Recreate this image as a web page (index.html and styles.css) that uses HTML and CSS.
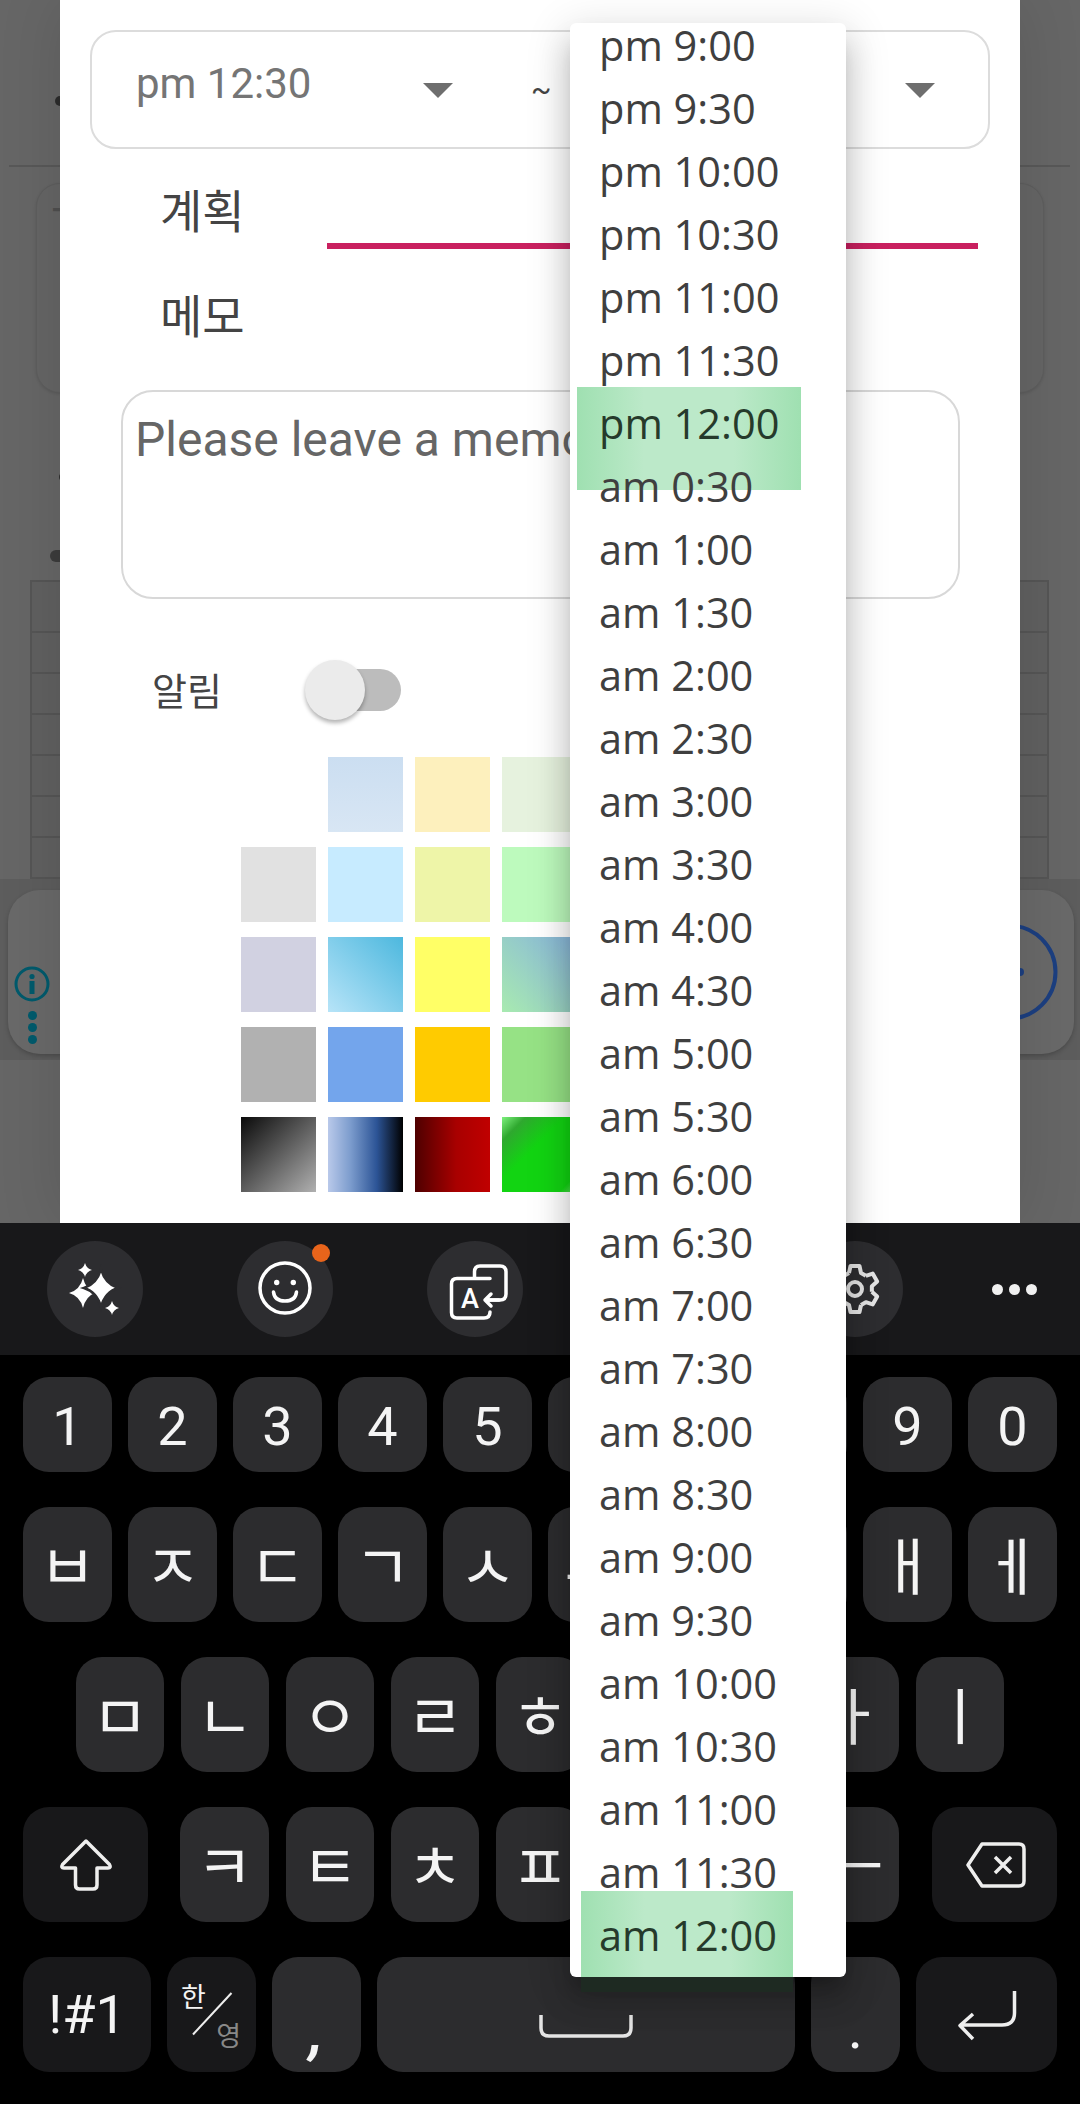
FILE: index.html
```html
<!DOCTYPE html>
<html lang="ko">
<head>
<meta charset="utf-8">
<title>Plan</title>
<link rel="stylesheet" href="styles.css">
</head>
<body>
<div class="screen">
  <div class="page">
    <div class="bg-dot bg-dot-a"></div>
    <div class="bg-rule"></div>
    <div class="bg-card"><span class="bg-card-t">T</span></div>
    <div class="bg-dot bg-dot-b"></div>
    <div class="bg-pill"></div>
    <div class="bg-table">
      <div class="bg-head"></div>
      <div class="bg-row"></div><div class="bg-row"></div><div class="bg-row"></div>
      <div class="bg-row"></div><div class="bg-row"></div><div class="bg-row"></div>
    </div>
    <div class="bg-band">
      <div class="bg-panel">
        <div class="panel-tools">
          <svg class="info-icon" viewBox="0 0 36 36"><circle cx="18" cy="18" r="16" fill="none" stroke="#005a6c" stroke-width="3"/><circle cx="18" cy="10.5" r="2.6" fill="#005a6c"/><rect x="15.5" y="15" width="5" height="13" fill="#005a6c"/></svg>
          <div class="tool-dots"><i></i><i></i><i></i></div>
        </div>
        <svg class="panel-ring" viewBox="0 0 98 98"><circle cx="49" cy="49" r="46.5" fill="none" stroke="#1c3f80" stroke-width="4"/><circle cx="60" cy="49" r="4" fill="#1c3f80"/></svg>
      </div>
    </div>

    <div class="modal">
      <div class="time-box">
        <span class="time-value">pm 12:30</span>
        <span class="caret"></span>
        <span class="tilde">~</span>
        <span class="caret caret-end"></span>
      </div>
      <div class="plan-row">
        <span class="field-label plan-label">계획</span>
        <span class="plan-line"></span>
      </div>
      <div class="field-label memo-label">메모</div>
      <div class="memo-box">Please leave a memo</div>
      <div class="alarm-row">
        <span class="alarm-label">알림</span>
        <span class="toggle"><span class="toggle-track"></span><span class="toggle-thumb"></span></span>
      </div>
      <div class="swatches">
        <span></span>
        <span class="sw sw-a2"></span><span class="sw sw-a3"></span><span class="sw sw-a4"></span>
        <span class="sw sw-b1"></span><span class="sw sw-b2"></span><span class="sw sw-b3"></span><span class="sw sw-b4"></span>
        <span class="sw sw-c1"></span><span class="sw sw-c2"></span><span class="sw sw-c3"></span><span class="sw sw-c4"></span>
        <span class="sw sw-d1"></span><span class="sw sw-d2"></span><span class="sw sw-d3"></span><span class="sw sw-d4"></span>
        <span class="sw sw-e1"></span><span class="sw sw-e2"></span><span class="sw sw-e3"></span><span class="sw sw-e4"></span>
      </div>
    </div>
  </div>

  <div class="keyboard">
    <div class="toolbar">
      <div class="tool">
        <svg viewBox="0 0 96 96"><path d="M36 37 Q39 49 48 52 Q39 55 36 67 Q33 55 22 52 Q33 49 36 37Z" fill="#fff"/><path d="M54 28 Q58 43 71 47 Q58 51 54 66 Q50 51 37 47 Q50 43 54 28Z" fill="#fff" stroke="#2d2d30" stroke-width="2.5"/><path d="M38 22 Q39.5 27.5 45 29 Q39.5 30.5 38 36 Q36.5 30.5 31 29 Q36.5 27.5 38 22Z" fill="#fff"/><path d="M65 60 Q66.5 65.5 72 67 Q66.5 68.5 65 74 Q63.5 68.5 58 67 Q63.5 65.5 65 60Z" fill="#fff"/></svg>
      </div>
      <div class="tool">
        <svg viewBox="0 0 96 96"><circle cx="48" cy="47" r="25" fill="none" stroke="#fff" stroke-width="3.5"/><circle cx="39.7" cy="41.5" r="2.7" fill="#fff"/><circle cx="56.3" cy="41.5" r="2.7" fill="#fff"/><path d="M36.5 51 Q37.5 60 48 60 Q58.5 60 59.5 51" fill="none" stroke="#fff" stroke-width="3.5" stroke-linecap="round"/></svg>
        <span class="tool-badge"></span>
      </div>
      <div class="tool">
        <svg viewBox="0 0 96 96"><path d="M63 37.5 Q60 37.5 58 37.5 H30 Q24.5 37.5 24.5 43 V71.5 Q24.5 77 30 77 H57 Q63 77 63 71" fill="none" stroke="#fff" stroke-width="3.5" stroke-linecap="round"/><path d="M47.5 37 V31 Q47.5 25 53 25 H73 Q79 25 79 31 V53 Q79 59 73 59 H59" fill="none" stroke="#fff" stroke-width="3.5"/><path d="M72 59 H58 M64 53 L58 59 L64 65" fill="none" stroke="#fff" stroke-width="3.5" stroke-linecap="round" stroke-linejoin="round"/><text class="tool-letter" x="43" y="67" text-anchor="middle">A</text></svg>
      </div>
      <div class="tool"></div>
      <div class="tool">
        <svg viewBox="0 0 96 96"><defs><polyline id="gear-seg" points="-6,-16 -4.5,-23 4.5,-23 6,-16 10.86,-13.2"/></defs><g transform="translate(48 48)" fill="none" stroke="#e6e6e6" stroke-width="4" stroke-linejoin="round"><use href="#gear-seg"/><use href="#gear-seg" transform="rotate(60)"/><use href="#gear-seg" transform="rotate(120)"/><use href="#gear-seg" transform="rotate(180)"/><use href="#gear-seg" transform="rotate(240)"/><use href="#gear-seg" transform="rotate(300)"/><circle r="7"/></g></svg>
      </div>
      <div class="more-dots"><i></i><i></i><i></i></div>
    </div>
    <div class="keys">
      <div class="key-row row-num">
        <span class="key num">1</span><span class="key num">2</span><span class="key num">3</span><span class="key num">4</span><span class="key num">5</span><span class="key num"></span><span class="key num"></span><span class="key num"></span><span class="key num">9</span><span class="key num">0</span>
      </div>
      <div class="key-row">
        <span class="key">ㅂ</span><span class="key">ㅈ</span><span class="key">ㄷ</span><span class="key">ㄱ</span><span class="key">ㅅ</span><span class="key">ㅛ</span><span class="key"></span><span class="key"></span><span class="key">ㅐ</span><span class="key">ㅔ</span>
      </div>
      <div class="key-row row-home">
        <span class="key">ㅁ</span><span class="key">ㄴ</span><span class="key">ㅇ</span><span class="key">ㄹ</span><span class="key">ㅎ</span><span class="key"></span><span class="key"></span><span class="key">ㅏ</span><span class="key">ㅣ</span>
      </div>
      <div class="key-row row-shift">
        <span class="key fn key-shift">
          <svg class="icon-shift" viewBox="0 0 60 60"><path d="M30 6 L6.5 29.5 Q4.5 33 8 33 H19.5 V50 Q19.5 54 23.5 54 H37 Q41 54 41 50 V33 H52 Q55.5 33 53.5 29.5 Z" fill="none" stroke="#eee" stroke-width="3.5" stroke-linejoin="round"/></svg>
        </span>
        <span class="key key-k">ㅋ</span><span class="key">ㅌ</span><span class="key">ㅊ</span><span class="key">ㅍ</span><span class="key"></span><span class="key"></span><span class="key">ㅡ</span>
        <span class="key fn key-back">
          <svg class="icon-back" viewBox="0 0 60 48"><path d="M16 3 H53 Q58 3 58 8 V40 Q58 45 53 45 H16 L2 24 Z" fill="none" stroke="#eee" stroke-width="3.5" stroke-linejoin="round"/><path d="M29 16 L45 32 M45 16 L29 32" stroke="#eee" stroke-width="3.5"/></svg>
        </span>
      </div>
      <div class="key-row row-bottom">
        <span class="key fn key-sym">!#1</span>
        <span class="key fn key-lang">
          <span class="lang-ko">한</span>
          <span class="lang-en">영</span>
          <svg class="lang-slash" viewBox="0 0 89 115"><path d="M64.5 36 L26 77.5" stroke="#eee" stroke-width="2"/></svg>
        </span>
        <span class="key key-comma">,</span>
        <span class="key key-space">
          <svg class="icon-space" viewBox="0 0 96 26"><path d="M3 2 V15 Q3 23 11 23 H85 Q93 23 93 15 V2" fill="none" stroke="#e4e4e4" stroke-width="3.5"/></svg>
        </span>
        <span class="key key-dot">.</span>
        <span class="key fn key-enter">
          <svg class="icon-enter" viewBox="0 0 70 60"><path d="M62.5 6 V28 Q62.5 40 50 40 H9 M21 29 L8 40.5 L21 54" fill="none" stroke="#eee" stroke-width="3.5" stroke-linejoin="round"/></svg>
        </span>
      </div>
    </div>
  </div>

  <div class="dropdown">
    <ul class="time-list">
      <li>pm 9:00</li><li>pm 9:30</li><li>pm 10:00</li><li>pm 10:30</li><li>pm 11:00</li><li>pm 11:30</li>
      <li><span class="hl hl-pm">pm 12:00</span></li>
      <li>am 0:30</li><li>am 1:00</li><li>am 1:30</li><li>am 2:00</li><li>am 2:30</li><li>am 3:00</li><li>am 3:30</li>
      <li>am 4:00</li><li>am 4:30</li><li>am 5:00</li><li>am 5:30</li><li>am 6:00</li><li>am 6:30</li><li>am 7:00</li>
      <li>am 7:30</li><li>am 8:00</li><li>am 8:30</li><li>am 9:00</li><li>am 9:30</li><li>am 10:00</li><li>am 10:30</li>
      <li>am 11:00</li><li>am 11:30</li>
      <li><span class="hl hl-am">am 12:00</span></li>
    </ul>
  </div>
</div>
</body>
</html>
```
FILE: styles.css
```css
* { box-sizing: border-box; }
html, body { margin: 0; padding: 0; background: #000; }
.screen { position: relative; width: 1080px; height: 2104px; overflow: hidden; font-family: "Roboto", "Noto Sans CJK KR", sans-serif; }

/* dimmed page behind the dialog */
.page { position: relative; height: 1223px; background: #666; overflow: hidden; }
.bg-dot { width: 10px; height: 10px; border-radius: 50%; background: #2c2c2c; }
.bg-dot-a { margin: 96px 0 0 55px; }
.bg-rule { height: 2px; margin: 59px 10px 0 9px; background: #585858; }
.bg-card { margin: 16px 0 0 36px; width: 1008px; height: 210px; border-radius: 24px; border: 1px solid #5e5e5e; background: #656565; box-shadow: 0 1px 3px rgba(0,0,0,.12); padding: 18px 0 0 15px; }
.bg-card-t { font-size: 40px; line-height: 44px; color: #4f4f4f; }
.bg-dot-b { margin: 79px 0 0 59px; }
.bg-pill { width: 30px; height: 12px; border-radius: 6px; background: #3c3c3c; margin: 68px 0 0 50px; }
.bg-table { margin: 18px 0 0 30px; width: 1019px; height: 299px; border: 2px solid #555; border-bottom: 0; background: #606060; }
.bg-head { height: 51px; border-bottom: 2px solid #555; }
.bg-row { height: 41px; border-bottom: 2px solid #555; }
.bg-band { height: 181px; padding: 11px 6px 0 8px; background: #5d5d5d; }
.bg-panel { height: 164px; border-radius: 32px; background: #696969; box-shadow: 0 2px 4px rgba(0,0,0,.2); display: flex; justify-content: space-between; align-items: flex-start; padding: 33px 16px 0 6px; }
.panel-tools { width: 36px; padding-top: 43px; display: flex; flex-direction: column; align-items: center; }
.info-icon { width: 36px; height: 36px; display: block; }
.tool-dots { display: flex; flex-direction: column; gap: 3px; margin-top: 9px; }
.tool-dots i { width: 9px; height: 9px; border-radius: 50%; background: #005a6c; display: block; }
.panel-ring { width: 98px; height: 98px; display: block; }

/* dialog */
.modal { position: absolute; top: 0; left: 60px; width: 960px; height: 1223px; background: #fff; box-shadow: 0 0 60px rgba(0,0,0,.12); padding-top: 30px; }
.time-box { display: flex; align-items: center; width: 900px; height: 119px; margin-left: 30px; border: 2px solid #dcdcdc; border-radius: 26px; padding-left: 44px; }
.time-value { width: 287px; font-size: 42px; line-height: 50px; color: #757575; margin-top: -12px; }
.caret { width: 0; height: 0; border-left: 15px solid transparent; border-right: 15px solid transparent; border-top: 15px solid #6e6e6e; margin-top: 2px; }
.tilde { width: 20px; margin-left: 78px; font-size: 30px; line-height: 30px; color: #444; }
.caret-end { margin-left: 354px; }
.plan-row { display: flex; align-items: flex-end; height: 100px; }
.field-label { font-family: "Noto Sans CJK KR", sans-serif; font-size: 46px; line-height: 42px; color: #444; }
.plan-label { width: 167px; margin: 0 0 20px 100px; }
.plan-line { width: 651px; height: 6px; background: #c9205f; }
.memo-label { margin: 43px 0 0 100px; }
.memo-box { width: 839px; height: 209px; margin: 56px 0 0 61px; border: 2px solid #d8d8d8; border-radius: 32px; padding: 21px 0 0 12px; font-size: 48px; line-height: 54px; color: #666; }
.alarm-row { display: flex; align-items: center; height: 62px; margin: 60px 0 0 92px; }
.alarm-label { width: 153px; padding-bottom: 2px; font-family: "Noto Sans CJK KR", sans-serif; font-size: 38px; line-height: 40px; color: #444; }
.toggle { position: relative; display: block; width: 96px; height: 62px; }
.toggle-track { position: absolute; top: 10px; left: 26px; width: 70px; height: 42px; border-radius: 21px; background: #bcbcbc; }
.toggle-thumb { position: absolute; top: 1px; left: 0; width: 60px; height: 60px; border-radius: 50%; background: #ebebeb; box-shadow: 0 3px 4px rgba(0,0,0,.3); }
.swatches { display: grid; grid-template-columns: repeat(4, 75px); grid-auto-rows: 75px; column-gap: 12px; row-gap: 15px; margin: 36px 0 0 181px; }
.sw { display: block; }
.sw-a2 { background: linear-gradient(180deg, #cbdef1, #d8e6f4); }
.sw-a3 { background: #fdf0bd; }
.sw-a4 { background: #e6f2de; }
.sw-b1 { background: #e1e1e1; }
.sw-b2 { background: #c7ebff; }
.sw-b3 { background: #eef5a8; }
.sw-b4 { background: #bdfabd; }
.sw-c1 { background: #d1d1e1; }
.sw-c2 { background: linear-gradient(to bottom left, #4db8de, #b7e4f8); }
.sw-c3 { background: #ffff66; }
.sw-c4 { background: linear-gradient(to bottom left, #87b4dc, #a8eab0); }
.sw-d1 { background: #b1b1b1; }
.sw-d2 { background: #73a5ec; }
.sw-d3 { background: #ffcb00; }
.sw-d4 { background: #96e285; }
.sw-e1 { background: linear-gradient(to bottom right, #0a0a0a, #656565 55%, #b0b0b0); }
.sw-e2 { background: linear-gradient(to right, #b9c9ea, #7c9ccd 30%, #2c5496 65%, #000); }
.sw-e3 { background: linear-gradient(to right, #4e0000, #a80000 55%, #c00000); }
.sw-e4 { background: linear-gradient(135deg, #7df07d 0%, #2fa82f 16%, #12d412 42%, #12d412 88%, #66e066 100%); }

/* keyboard */
.keyboard { height: 881px; background: #000; }
.toolbar { display: flex; align-items: center; gap: 94px; height: 132px; padding-left: 47px; background: #18181a; }
.tool { position: relative; flex: 0 0 96px; height: 96px; border-radius: 50%; background: #2d2d30; }
.tool svg { display: block; width: 96px; height: 96px; }
.tool-letter { font-family: "Roboto", sans-serif; font-size: 27px; font-weight: 500; fill: #fff; }
.tool-badge { position: absolute; top: 3px; left: 75px; width: 18px; height: 18px; border-radius: 50%; background: #e8641b; }
.more-dots { display: flex; gap: 6px; margin-left: -5px; }
.more-dots i { display: block; width: 11px; height: 11px; border-radius: 50%; background: #f0f0f0; }
.keys { display: flex; flex-direction: column; gap: 35px; padding-top: 22px; }
.key-row { display: flex; gap: 16px; height: 115px; padding-left: 23px; }
.row-num { height: 95px; }
.key { display: flex; align-items: center; justify-content: center; flex: 0 0 89px; border-radius: 26px; background: #2c2c2e; color: #f4f4f4; font-family: "Noto Sans CJK KR", sans-serif; font-size: 62px; padding-bottom: 4px; }
.num { font-family: "Roboto", sans-serif; font-size: 54px; padding: 4px 0 0; }
.row-home { padding-left: 76px; gap: 17px; }
.row-home .key { flex-basis: 88px; }
.row-shift { gap: 17px; }
.row-shift .key { flex-basis: 88px; }
.row-shift .key-shift { flex-basis: 125px; }
.row-shift .key-k { flex-basis: 89px; margin-left: 15px; }
.row-shift .key-back { flex-basis: 125px; margin-left: 16px; }
.fn { background: #18181a; padding: 0; }
.icon-shift { width: 60px; height: 60px; }
.icon-back { width: 60px; height: 48px; margin-left: 2px; }
.key-sym { flex-basis: 128px; font-family: "Roboto", sans-serif; font-size: 54px; }
.key-lang { position: relative; display: grid; grid-template-columns: 1fr 1fr; grid-template-rows: 1fr 1fr; padding: 26px 15px 24px 14px; font-size: 27px; }
.lang-ko { grid-column: 1; grid-row: 1; line-height: 26px; align-self: start; }
.lang-en { grid-column: 2; grid-row: 2; line-height: 26px; color: #888; align-self: end; justify-self: end; }
.lang-slash { position: absolute; top: 0; left: 0; width: 89px; height: 115px; }
.key-comma { align-items: flex-end; font-family: "Roboto", sans-serif; font-weight: 700; font-size: 58px; line-height: 60px; padding: 0 0 10px; font-style: italic; }
.key-space { flex-basis: 418px; padding: 23px 0 0; }
.icon-space { width: 96px; height: 26px; }
.key-dot { align-items: flex-end; font-family: "Roboto", sans-serif; font-size: 58px; line-height: 60px; padding-bottom: 14px; }
.key-enter { flex-basis: 141px; }
.icon-enter { width: 70px; height: 60px; }

/* open time menu */
.dropdown { position: absolute; top: 23px; left: 570px; width: 276px; height: 1954px; border-radius: 6px; background: #fff; box-shadow: 0 15px 15px -9px rgba(0,0,0,.2), 0 24px 30px 3px rgba(0,0,0,.14), 0 9px 42px 6px rgba(0,0,0,.12); }
.time-list { list-style: none; margin: -9.5px 0 0; padding: 0 0 0 29px; font-family: "Open Sans", sans-serif; font-size: 41.5px; color: #3f3f3f; }
.time-list li { position: relative; z-index: 0; height: 63px; line-height: 63px; white-space: nowrap; }
.hl { position: relative; display: inline-block; height: 63px; color: #263a2b; }
.hl::before { content: ""; position: absolute; z-index: -1; background: linear-gradient(to right, #9fe0b1, #bce9c9 30%, #bce9c9 70%, #9fe0b1); }
.hl-pm::before { top: -4.5px; bottom: -35px; left: -22px; right: -22px; }
.hl-am::before { top: -12.5px; bottom: -10.5px; left: -18px; right: -16px; }
.hl-am::after { content: ""; position: absolute; left: -18px; right: -16px; top: 73.5px; height: 15px; background: #1e2a22; }
```
